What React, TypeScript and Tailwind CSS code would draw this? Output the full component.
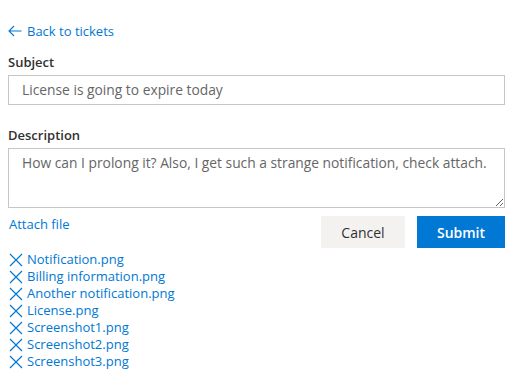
import React from "react";

const files = [
  "Notification.png",
  "Billing information.png",
  "Another notification.png",
  "License.png",
  "Screenshot1.png",
  "Screenshot2.png",
  "Screenshot3.png",
];

function XIcon() {
  return (
    <svg width="14" height="14" viewBox="0 0 14 14" className="shrink-0">
      <path d="M1 1 L13 13 M13 1 L1 13" stroke="#0078d4" strokeWidth="1.2" fill="none" />
    </svg>
  );
}

export default function App() {
  return (
    <div className="w-[512px] h-[384px] bg-white overflow-hidden pl-2 pr-[7px] pt-[21px] font-['Segoe_UI','Open_Sans',sans-serif] text-[13px] text-[#323130]">
      <a className="flex items-center h-[20px] leading-[20px] text-[#0078d4] gap-[5px] w-fit">
        <svg width="14" height="12" viewBox="0 0 14 12">
          <path d="M6 1 L1 6 L6 11 M1 6 L13.5 6" stroke="#0078d4" strokeWidth="1.1" fill="none" />
        </svg>
        <span>Back to tickets</span>
      </a>
      <div className="mt-[11px] h-[20px] leading-[20px] font-semibold">Subject</div>
      <div className="mt-[3px] h-[30px] border border-[#c8c6c4] flex items-center px-[13px] text-[#666666] text-[13.8px]">
        License is going to expire today
      </div>
      <div className="mt-[20px] h-[20px] leading-[20px] font-semibold">Description</div>
      <textarea
        className="mt-[3px] block w-full h-[60px] border border-[#c8c6c4] pl-[13px] pr-[8px] py-[4px] leading-[20px] text-[#666666] text-[13.8px] outline-none resize-y"
        defaultValue="How can I prolong it? Also, I get such a strange notification, check attach."
      />
      <div className="mt-[8px] flex justify-between items-start">
        <a className="text-[#0078d4] leading-[16px] pl-[1px]">Attach file</a>
        <div className="flex gap-[12px]">
          <button className="w-[84px] h-[32px] bg-[#f3f2f1] text-[#323130] text-[14px]">Cancel</button>
          <button className="w-[88px] h-[32px] bg-[#0078d4] text-white font-semibold text-[14px]">Submit</button>
        </div>
      </div>
      <div className="mt-[3px] flex flex-col">
        {files.map((f) => (
          <div key={f} className="flex items-center gap-[4px] h-[17px] leading-[17px] text-[#0078d4] pl-[1px]">
            <XIcon />
            <span>{f}</span>
          </div>
        ))}
      </div>
    </div>
  );
}
